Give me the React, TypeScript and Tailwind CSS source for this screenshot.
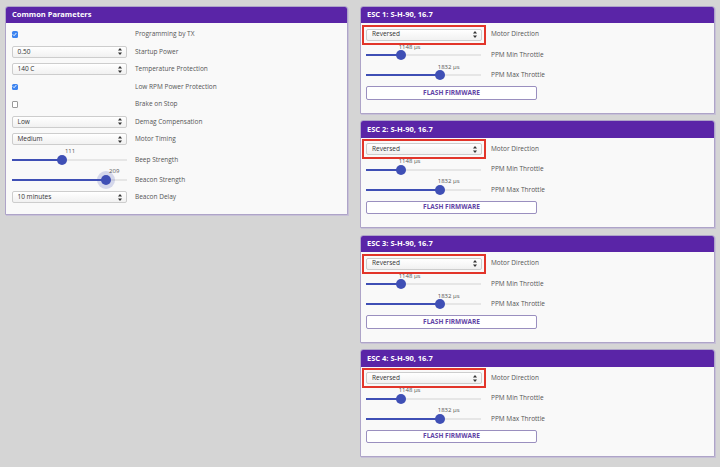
import React from 'react';

const font = { fontFamily: '"Open Sans", "Liberation Sans", sans-serif' };

function Arrows() {
  return (
    <svg width="4" height="7" viewBox="0 0 4 7" className="shrink-0">
      <path d="M2 0 L4 2.6 L0 2.6 Z" fill="#333" />
      <path d="M2 7 L4 4.4 L0 4.4 Z" fill="#333" />
    </svg>
  );
}

function Select({ value, wide }: { value: string; wide?: boolean }) {
  return (
    <div
      className={`flex h-[12px] items-center justify-between rounded-[2px] border border-[#cdcdcd] bg-gradient-to-b from-white to-[#f1f1f1] pl-[5px] pr-[4px] text-[6.5px] text-[#333] ${
        wide ? 'w-[116px]' : 'w-[115px]'
      }`}
    >
      <span className="leading-none">{value}</span>
      <Arrows />
    </div>
  );
}

function Checkbox({ checked }: { checked: boolean }) {
  if (!checked) {
    return <div className="h-[6.5px] w-[6.5px] rounded-[1px] border border-[#9a9a9a] bg-white" />;
  }
  return (
    <div className="flex h-[6.5px] w-[6.5px] items-center justify-center rounded-[1.5px] bg-[#3d84f0]">
      <svg width="5" height="5" viewBox="0 0 10 10">
        <path d="M2 5.2 L4.2 7.4 L8.2 2.6" stroke="white" strokeWidth="1.8" fill="none" strokeLinecap="round" />
      </svg>
    </div>
  );
}

function Slider({ ratio, label, width, halo }: { ratio: number; label: string; width: number; halo?: boolean }) {
  const left = ratio * width;
  return (
    <div className="relative h-[2px] bg-[#e6e6e6]" style={{ width }}>
      <div className="absolute left-0 top-0 h-full bg-[#3f4fb5]" style={{ width: left }} />
      <div
        className={`absolute top-1/2 h-[10px] w-[10px] -translate-x-1/2 -translate-y-1/2 rounded-full bg-[#3f4fb5] ${
          halo ? 'ring-[4px] ring-[#3f4fb5]/20' : ''
        }`}
        style={{ left }}
      />
      <span
        className="absolute bottom-[6.5px] -translate-x-1/2 whitespace-nowrap text-[6px] leading-none text-[#555]"
        style={{ left: left + 8.5 }}
      >
        {label}
      </span>
    </div>
  );
}

function Label({ children }: { children: React.ReactNode }) {
  return <div className="text-[6.5px] leading-none text-[#555]">{children}</div>;
}

function Header({ children }: { children: React.ReactNode }) {
  return (
    <div className="flex h-[16.5px] items-center bg-[#5a25a7] pl-[6px] text-[7.5px] font-bold text-white">
      {children}
    </div>
  );
}

function Row({ children, label, className = '' }: { children: React.ReactNode; label: string; className?: string }) {
  return (
    <div className={`grid h-[17.5px] grid-cols-[123.5px_1fr] items-center ${className}`}>
      <div className="flex items-center">{children}</div>
      <Label>{label}</Label>
    </div>
  );
}

function CommonParameters() {
  return (
    <div className="w-[343px] overflow-hidden rounded-t-[3px] border border-[#aea4c8] bg-[#f9f9f9] shadow-[1px_1px_0_#c7c1d6]">
      <Header>Common Parameters</Header>
      <div className="pl-[5.5px] pt-[2.5px] pb-[7.5px]">
        <Row label="Programming by TX">
          <Checkbox checked />
        </Row>
        <Row label="Startup Power">
          <Select value="0.50" />
        </Row>
        <Row label="Temperature Protection">
          <Select value="140 C" />
        </Row>
        <Row label="Low RPM Power Protection">
          <Checkbox checked />
        </Row>
        <Row label="Brake on Stop">
          <Checkbox checked={false} />
        </Row>
        <Row label="Demag Compensation">
          <Select value="Low" />
        </Row>
        <Row label="Motor Timing">
          <Select value="Medium" />
        </Row>
        <Row label="Beep Strength" className="mt-[3px]">
          <Slider ratio={111 / 255} label="111" width={115} />
        </Row>
        <Row label="Beacon Strength" className="mt-[2.5px]">
          <Slider ratio={209 / 255} label="209" width={115} halo />
        </Row>
        <Row label="Beacon Delay">
          <Select value="10 minutes" />
        </Row>
      </div>
    </div>
  );
}

function EscRow({ children, label, className = '' }: { children: React.ReactNode; label: string; className?: string }) {
  return (
    <div className={`grid grid-cols-[125px_1fr] items-center pl-[4px] ${className}`}>
      <div className="flex items-center">{children}</div>
      <Label>{label}</Label>
    </div>
  );
}

function EscPanel({ n }: { n: number }) {
  return (
    <div className="w-[355px] overflow-hidden rounded-t-[3px] border border-[#aea4c8] bg-[#f9f9f9] shadow-[1px_1px_0_#c7c1d6]">
      <Header>{`ESC ${n}: S-H-90, 16.7`}</Header>
      <div className="pl-[1px] pt-[1.5px] pb-[13px]">
        <div className="relative z-10 grid grid-cols-[129px_1fr] items-center">
          <div className="w-[124px] border-2 border-[#e2352a] p-[2px]">
            <Select value="Reversed" wide />
          </div>
          <Label>Motor Direction</Label>
        </div>
        <EscRow label="PPM Min Throttle" className="mt-[0.5px] h-[20px]">
          <Slider ratio={0.305} label="1148 µs" width={115} />
        </EscRow>
        <EscRow label="PPM Max Throttle" className="h-[20.5px]">
          <Slider ratio={0.645} label="1832 µs" width={115} />
        </EscRow>
        <div className="mt-[0.5px] pl-[4px]">
          <button className="flex h-[13.5px] w-[171px] items-center justify-center rounded-[2px] border border-[#9a8fbf] bg-white text-[6.5px] font-bold text-[#6243a6]">
            FLASH FIRMWARE
          </button>
        </div>
      </div>
    </div>
  );
}

export default function App() {
  return (
    <div className="flex h-[467px] w-[720px] items-start gap-[12px] bg-[#d5d5d5] pl-[5px] pt-[5.5px]" style={font}>
      <CommonParameters />
      <div className="flex flex-col gap-[6.5px]">
        {[1, 2, 3, 4].map((n) => (
          <EscPanel key={n} n={n} />
        ))}
      </div>
    </div>
  );
}
